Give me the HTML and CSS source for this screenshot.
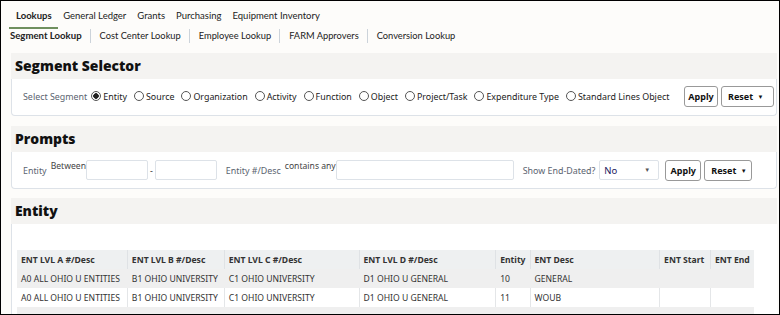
FILE: index.html
```html
<!DOCTYPE html>
<html lang="en">

<head>
    <meta charset="UTF-8" />
    <title>Segment Lookup</title>
    <link rel="stylesheet" href="styles.css">
</head>

<body>
    <div class="frame">
        <nav class="tabs">
            <a class="tab active">Lookups</a>
            <a class="tab">General Ledger</a>
            <a class="tab">Grants</a>
            <a class="tab">Purchasing</a>
            <a class="tab">Equipment Inventory</a>
        </nav>
        <nav class="subtabs">
            <a class="subtab active">Segment Lookup</a>
            <a class="subtab">Cost Center Lookup</a>
            <a class="subtab">Employee Lookup</a>
            <a class="subtab">FARM Approvers</a>
            <a class="subtab">Conversion Lookup</a>
        </nav>

        <section class="panel">
            <h2 class="panel-title">Segment Selector</h2>
            <div class="panel-body segment-row">
                <span class="label">Select Segment</span>
                <label class="radio checked"><span class="dot"></span>Entity</label>
                <label class="radio"><span class="dot"></span>Source</label>
                <label class="radio"><span class="dot"></span>Organization</label>
                <label class="radio"><span class="dot"></span>Activity</label>
                <label class="radio"><span class="dot"></span>Function</label>
                <label class="radio"><span class="dot"></span>Object</label>
                <label class="radio"><span class="dot"></span>Project/Task</label>
                <label class="radio"><span class="dot"></span>Expenditure Type</label>
                <label class="radio"><span class="dot"></span>Standard Lines Object</label>
                <div class="buttons">
                    <button class="btn apply">Apply</button>
                    <button class="btn reset">Reset <span class="caret">&#9660;</span></button>
                </div>
            </div>
        </section>

        <section class="panel">
            <h2 class="panel-title">Prompts</h2>
            <div class="panel-body prompt-row">
                <span class="label">Entity</span>
                <span class="op">Between</span>
                <span class="field w62"></span>
                <span class="dash">-</span>
                <span class="field w62"></span>
                <span class="label gap">Entity #/Desc</span>
                <span class="op">contains any</span>
                <span class="field w178"></span>
                <span class="label gap">Show End-Dated?</span>
                <span class="field select">No <span class="caret">&#9660;</span></span>
                <div class="buttons">
                    <button class="btn apply">Apply</button>
                    <button class="btn reset small">Reset <span class="caret">&#9660;</span></button>
                </div>
            </div>
        </section>

        <section class="panel entity">
            <h2 class="panel-title">Entity</h2>
            <div class="panel-body table-wrap">
                <table class="grid">
                    <tr>
                        <th class="c1">ENT LVL A #/Desc</th>
                        <th class="c2">ENT LVL B #/Desc</th>
                        <th class="c3">ENT LVL C #/Desc</th>
                        <th class="c4">ENT LVL D #/Desc</th>
                        <th class="c5">Entity</th>
                        <th class="c6">ENT Desc</th>
                        <th class="c7">ENT Start</th>
                        <th class="c8">ENT End</th>
                    </tr>
                    <tr class="odd">
                        <td>A0 ALL OHIO U ENTITIES</td>
                        <td>B1 OHIO UNIVERSITY</td>
                        <td>C1 OHIO UNIVERSITY</td>
                        <td>D1 OHIO U GENERAL</td>
                        <td>10</td>
                        <td>GENERAL</td>
                        <td></td>
                        <td></td>
                    </tr>
                    <tr>
                        <td>A0 ALL OHIO U ENTITIES</td>
                        <td>B1 OHIO UNIVERSITY</td>
                        <td>C1 OHIO UNIVERSITY</td>
                        <td>D1 OHIO U GENERAL</td>
                        <td>11</td>
                        <td>WOUB</td>
                        <td></td>
                        <td></td>
                    </tr>
                    <tr class="odd">
                        <td>&nbsp;</td>
                        <td></td>
                        <td></td>
                        <td></td>
                        <td></td>
                        <td></td>
                        <td></td>
                        <td></td>
                    </tr>
                </table>
            </div>
        </section>
    </div>
</body>

</html>
```

FILE: styles.css
```css
:root {
    --borda: #dde2e8;
    --cabecalho: #f4f3f1;
    --texto: #333;
    --verde: #6f8f5e;
}

body {
    margin: 0;
    font-family: 'Noto Sans', 'Open Sans', sans-serif;
    color: var(--texto);
    background: #fff;
}

.frame {
    width: 780px;
    height: 315px;
    box-sizing: border-box;
    border: 1px solid #000;
    overflow: hidden;
    background: #fdfcfa;
}

.tabs {
    display: flex;
    padding: 8px 0 0 8px;
    font-family: Lato, sans-serif;
    font-size: 9.5px;
}

.tab {
    padding: 0 5.5px 4px 5.5px;
    line-height: 14px;
    border-bottom: 2px solid transparent;
    color: #222;
    white-space: nowrap;
}

.tab.active {
    padding-left: 7px;
    padding-right: 6px;
    font-weight: bold;
    border-bottom-color: var(--verde);
}

.subtabs {
    display: flex;
    padding-left: 9px;
    font-family: Lato, sans-serif;
    font-size: 9.3px;
}

.subtab {
    line-height: 14px;
    padding: 0 8px 0 9px;
    border-left: 1px solid #ccd3da;
    color: #222;
    white-space: nowrap;
}

.subtab.active {
    font-weight: bold;
    font-size: 9.6px;
    border-left: none;
    padding-left: 0;
}

.panel {
    margin: 10px 2px 0 10px;
}

.panel + .panel {
    margin-top: 10px;
}

.panel.entity {
    margin-top: 9px;
}

.panel-title {
    margin: 0;
    height: 26px;
    line-height: 26px;
    padding-left: 4px;
    font-family: 'Open Sans', sans-serif;
    font-weight: 800;
    font-size: 13.9px;
    color: #111;
    background: var(--cabecalho);
}

.panel-body {
    background: #fff;
    border: 1px solid var(--borda);
    border-top: none;
    border-radius: 0 0 4px 4px;
}

.segment-row,
.prompt-row {
    display: flex;
    align-items: center;
    font-size: 8.9px;
    white-space: nowrap;
}

.segment-row {
    height: 34px;
    padding: 0 0 2px 11px;
}

.prompt-row {
    height: 36px;
    padding-left: 11px;
}

.label {
    color: #5b6470;
    margin-right: 4px;
}

.label.gap {
    margin-left: 9px;
}

.radio {
    display: flex;
    align-items: center;
    margin-right: 7px;
    color: #222;
}

.dot {
    width: 10px;
    height: 10px;
    border: 1px solid #555;
    border-radius: 50%;
    margin-right: 2px;
    box-sizing: border-box;
    background: #fff;
}

.radio.checked .dot {
    background: radial-gradient(circle, #222 0 2.5px, #fff 3px);
}

.buttons {
    display: flex;
    margin-left: auto;
    margin-right: 2px;
}

.btn {
    font-family: 'Noto Sans', sans-serif;
    font-size: 9px;
    font-weight: bold;
    color: #111;
    background: #fff;
    border: 1px solid #999;
    border-radius: 3px;
    height: 21px;
    padding: 0 5px;
    margin-left: 3px;
    white-space: nowrap;
}

.btn.apply {
    width: 34px;
    padding: 0;
}

.btn.reset {
    width: 53px;
    text-align: left;
    padding-left: 6px;
}

.btn.reset.small {
    width: 48px;
}

.prompt-row .btn.apply {
    width: 36px;
}

.caret {
    font-size: 6px;
    margin-left: 2px;
    vertical-align: 1px;
}

.op {
    align-self: flex-start;
    margin-top: 8px;
    font-size: 8.6px;
    color: #444;
}

.field {
    height: 20px;
    box-sizing: border-box;
    border: 1px solid var(--borda);
    border-radius: 2px;
    background: #fff;
}

.w62 {
    width: 62px;
}

.w178 {
    width: 178px;
}

.dash {
    margin: 0 2px;
}

.select {
    width: 60px;
    display: flex;
    align-items: center;
    justify-content: space-between;
    padding: 0 8px 0 4px;
    color: #1a2060;
    font-size: 9.5px;
}

.select .caret {
    color: #555;
}

.prompt-row .buttons {
    margin-left: 3px;
}

.table-wrap {
    height: 120px;
    padding: 26px 0 0 5px;
    border-radius: 0;
    border-right: none;
}

.grid {
    border-collapse: collapse;
    font-size: 8.6px;
    width: 737px;
}

.grid th,
.grid td {
    height: 19px;
    padding: 0 4px;
    text-align: left;
    white-space: nowrap;
    border-left: 1px solid #e4e6e8;
    color: #333;
}

.grid th {
    background: #eef0f1;
    font-weight: bold;
    border-left: 1px solid #dfe2e5;
}

.grid tr.odd td {
    background: #efefef;
    border-left-color: #efefef;
}

.grid th:first-child,
.grid td:first-child {
    border-left: none;
}

.c1 { width: 102px; }
.c2 { width: 88px; }
.c3 { width: 128px; }
.c4 { width: 130px; }
.c5 { width: 23px; }
.c6 { width: 125px; }
.c7 { width: 42px; }
.c8 { width: 35px; }
```
